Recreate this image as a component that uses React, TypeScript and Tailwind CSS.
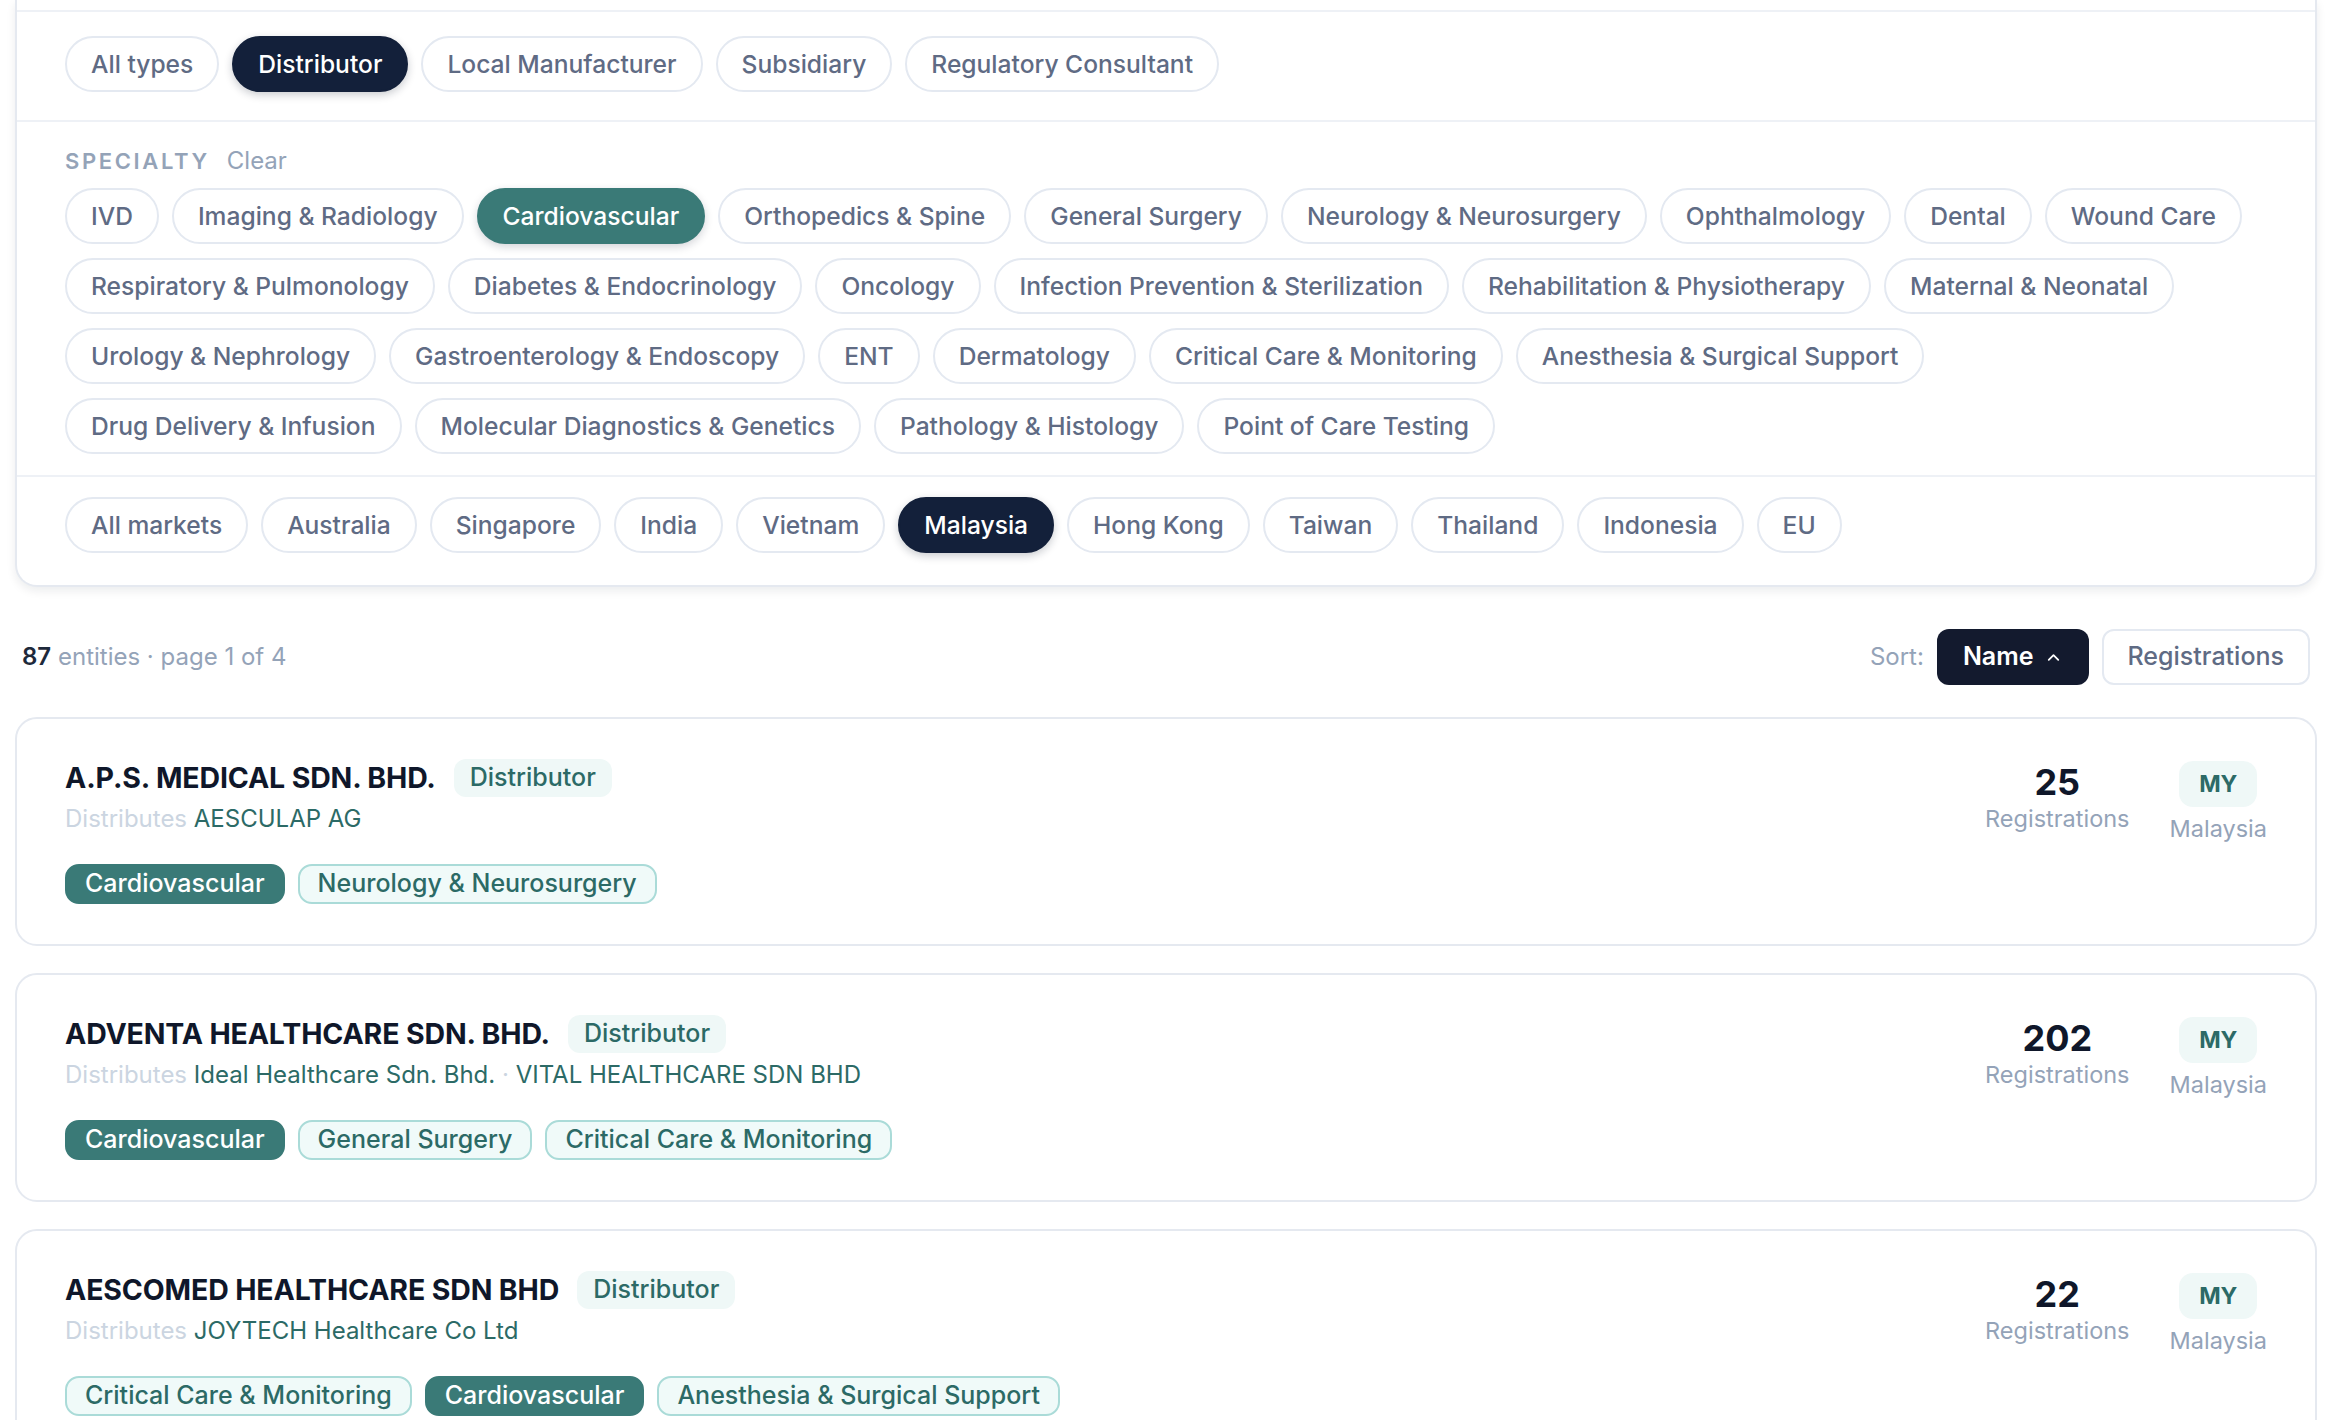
import { ChevronUp } from "lucide-react";

const types = ["All types", "Distributor", "Local Manufacturer", "Subsidiary", "Regulatory Consultant"];

const specialties = [
  "IVD",
  "Imaging & Radiology",
  "Cardiovascular",
  "Orthopedics & Spine",
  "General Surgery",
  "Neurology & Neurosurgery",
  "Ophthalmology",
  "Dental",
  "Wound Care",
  "Respiratory & Pulmonology",
  "Diabetes & Endocrinology",
  "Oncology",
  "Infection Prevention & Sterilization",
  "Rehabilitation & Physiotherapy",
  "Maternal & Neonatal",
  "Urology & Nephrology",
  "Gastroenterology & Endoscopy",
  "ENT",
  "Dermatology",
  "Critical Care & Monitoring",
  "Anesthesia & Surgical Support",
  "Drug Delivery & Infusion",
  "Molecular Diagnostics & Genetics",
  "Pathology & Histology",
  "Point of Care Testing",
];

const markets = [
  "All markets",
  "Australia",
  "Singapore",
  "India",
  "Vietnam",
  "Malaysia",
  "Hong Kong",
  "Taiwan",
  "Thailand",
  "Indonesia",
  "EU",
];

type Entity = {
  name: string;
  distributes: string[];
  tags: string[];
  registrations: number;
};

const entities: Entity[] = [
  {
    name: "A.P.S. MEDICAL SDN. BHD.",
    distributes: ["AESCULAP AG"],
    tags: ["Cardiovascular", "Neurology & Neurosurgery"],
    registrations: 25,
  },
  {
    name: "ADVENTA HEALTHCARE SDN. BHD.",
    distributes: ["Ideal Healthcare Sdn. Bhd.", "VITAL HEALTHCARE SDN BHD"],
    tags: ["Cardiovascular", "General Surgery", "Critical Care & Monitoring"],
    registrations: 202,
  },
  {
    name: "AESCOMED HEALTHCARE SDN BHD",
    distributes: ["JOYTECH Healthcare Co Ltd"],
    tags: ["Critical Care & Monitoring", "Cardiovascular", "Anesthesia & Surgical Support"],
    registrations: 22,
  },
];

function FilterPill({ label, active, tone = "navy" }: { label: string; active?: boolean; tone?: "navy" | "teal" }) {
  const on =
    tone === "teal"
      ? "border-[#3a7a77] bg-[#3a7a77] text-white shadow-[0_3px_8px_rgba(15,23,42,0.18)]"
      : "border-[#13203a] bg-[#13203a] text-white shadow-[0_3px_8px_rgba(15,23,42,0.22)]";
  return (
    <button
      className={`flex h-[56px] items-center rounded-full border-2 px-[24px] text-[24.6px] font-medium ${
        active ? on : "border-[#e4e9f1] bg-white text-[#5f6b84]"
      }`}
    >
      {label}
    </button>
  );
}

function EntityCard({ entity }: { entity: Entity }) {
  return (
    <div className="flex items-start justify-between rounded-[22px] border-2 border-[#e5e9f0] bg-white px-[48px] py-[40px]">
      <div className="flex flex-col">
        <div className="flex h-[38px] items-center gap-[18px]">
          <h3 className="text-[28.5px] font-bold tracking-[-0.005em] text-[#0f172a]">{entity.name}</h3>
          <span className="flex h-[38px] items-center rounded-[12px] bg-[#eff8f7] px-[16px] text-[25px] font-medium text-[#2c6a66]">
            Distributor
          </span>
        </div>
        <p className="mt-[7px] text-[24px] leading-[30px]">
          <span className="text-[#cbd5e1]">Distributes </span>
          {entity.distributes.map((d, i) => (
            <span key={d}>
              {i > 0 && <span className="text-[#cbd5e1]"> · </span>}
              <span className="text-[#2c6a66]">{d}</span>
            </span>
          ))}
        </p>
        <div className="mt-[30px] flex gap-[13px]">
          {entity.tags.map((t) =>
            t === "Cardiovascular" ? (
              <span
                key={t}
                className="flex h-[40px] items-center rounded-[14px] border-2 border-[#3a7a77] bg-[#3a7a77] px-[18px] text-[25px] font-medium text-white"
              >
                {t}
              </span>
            ) : (
              <span
                key={t}
                className="flex h-[40px] items-center rounded-[14px] border-2 border-[#aadbd8] bg-[#f0faf9] px-[18px] text-[25px] font-medium text-[#2c6a66]"
              >
                {t}
              </span>
            ),
          )}
        </div>
      </div>

      {/* registrations + market */}
      <div className="flex items-start gap-[40px]">
        <div className="mt-[4px] flex flex-col items-center">
          <span className="text-[36px] font-bold leading-[38px] text-[#0f172a]">{entity.registrations}</span>
          <span className="mt-[3px] text-[23.5px] leading-[30px] text-[#94a3b8]">Registrations</span>
        </div>
        <div className="mt-[2px] flex flex-col items-center">
          <span className="flex h-[46px] w-[78px] items-center justify-center rounded-[14px] bg-[#eff8f7] text-[23px] font-bold text-[#2c6a66]">
            MY
          </span>
          <span className="mt-[7px] text-[23.5px] leading-[30px] text-[#94a3b8]">Malaysia</span>
        </div>
      </div>
    </div>
  );
}

export default function App() {
  return (
    <div className="min-h-screen bg-white pl-[15px] pr-[9px] font-['Inter',sans-serif]">
      <div className="rounded-b-[22px] border-x-2 border-b-2 border-[#e5e9f0] bg-white shadow-[0_4px_10px_rgba(15,23,42,0.08)]">
        <div className="h-[12px] border-b-2 border-[#eef1f6]" />

        <div className="flex gap-[13px] border-b-2 border-[#eef1f6] px-[48px] pb-[28px] pt-[24px]">
          {types.map((t) => (
            <FilterPill key={t} label={t} active={t === "Distributor"} />
          ))}
        </div>

        <div className="border-b-2 border-[#eef1f6] pb-[21px] pl-[48px] pr-[56px] pt-[21px]">
          <div className="flex items-center gap-[17px]">
            <span className="text-[22px] font-semibold tracking-[0.12em] text-[#94a3b8]">SPECIALTY</span>
            <span className="text-[24px] text-[#94a3b8]">Clear</span>
          </div>
          <div className="mt-[9px] flex flex-wrap gap-x-[13px] gap-y-[14px]">
            {specialties.map((s) => (
              <FilterPill key={s} label={s} tone="teal" active={s === "Cardiovascular"} />
            ))}
          </div>
        </div>

        <div className="flex flex-wrap gap-[13px] px-[48px] pb-[32px] pt-[20px]">
          {markets.map((m) => (
            <FilterPill key={m} label={m} active={m === "Malaysia"} />
          ))}
        </div>
      </div>

      {/* results summary + sort */}
      <div className="mt-[42px] flex items-center justify-between pl-[7px] pr-[7px]">
        <p className="text-[24px] text-[#94a3b8]">
          <span className="font-semibold text-[#1e293b]">87</span> entities · page 1 of 4
        </p>
        <div className="flex items-center gap-[13px]">
          <span className="text-[24px] text-[#94a3b8]">Sort:</span>
          <button className="flex h-[56px] items-center gap-[10px] rounded-[12px] bg-[#131a2e] px-[26px] text-[25px] font-semibold text-white">
            Name
            <ChevronUp size={19} strokeWidth={2.25} />
          </button>
          <button className="flex h-[56px] items-center rounded-[12px] border-2 border-[#e4e9f1] bg-white px-[24px] text-[25px] font-medium text-[#5f6b84]">
            Registrations
          </button>
        </div>
      </div>

      <div className="mt-[32px] flex flex-col gap-[27px] pb-[40px]">
        {entities.map((e) => (
          <EntityCard key={e.name} entity={e} />
        ))}
      </div>
    </div>
  );
}
